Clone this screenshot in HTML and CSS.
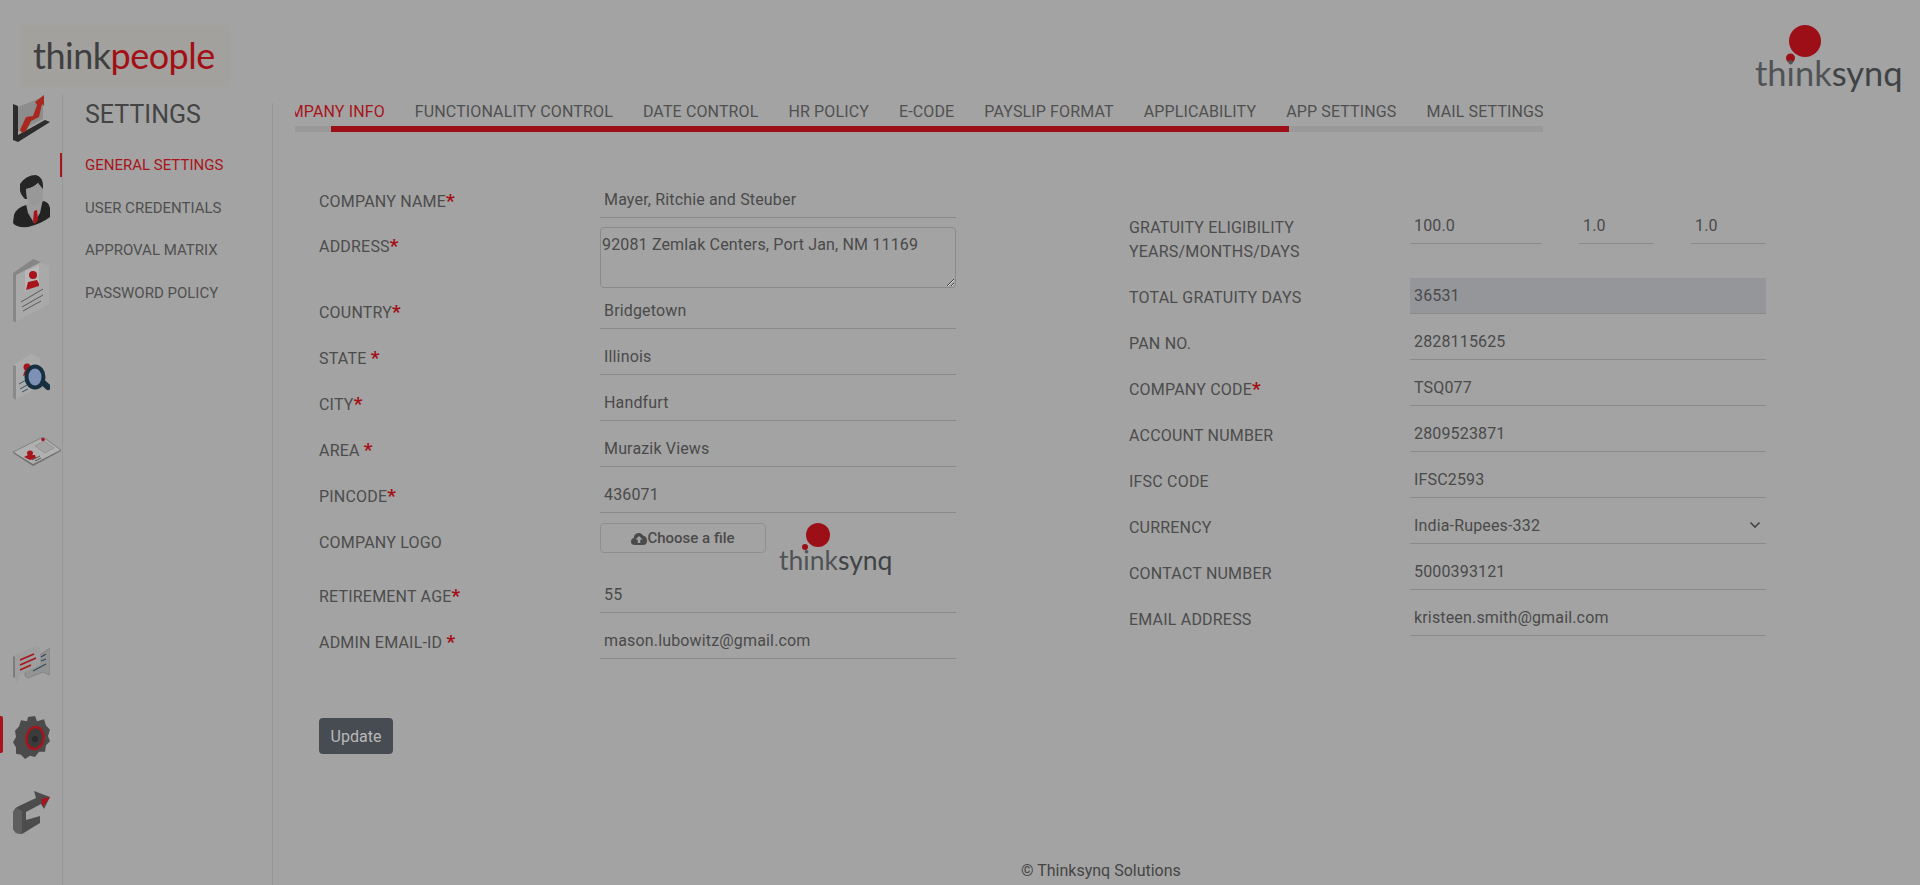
FILE: index.html
```html
<!DOCTYPE html>
<html lang="en">
<head>
  <meta charset="UTF-8">
  <title>Settings - Think People</title>
  <meta name="viewport" content="width=device-width, initial-scale=1.0">
  <link rel="stylesheet" href="styles.css">
</head>
<body>

  <header class="topbar">
    <div class="logo-people"><span>think</span><b>people</b></div>
    <div class="logo-synq">
      <svg class="logo-dots" width="36" height="38" viewBox="0 0 36 38"><circle cx="19" cy="16" r="16" fill="#9c0f17"/><circle cx="4.500" cy="33" r="4.500" fill="#9c0f17"/></svg>
      <span class="logo-synq-text">think<b>synq</b></span>
    </div>
  </header>

  <div class="layout">
    <nav class="rail">
      <div class="rail-group">
        <a class="rail-icon rail-chart">
          <svg width="37" height="48" viewBox="0 0 37 48">
            <polygon points="5,12 30,2 30,24 5,37" fill="#8d8d8d"/>
            <polygon points="0,9 5,11 5,40 32,25 37,27 5,47 0,45" fill="#2c2c2c"/>
            <polygon points="7,35 13,22 20,21 24,10 22,7 31,0 31,11 29,9 26,22 18,26 13,36 9,38" fill="#a8291f"/>
          </svg>
        </a>
        <a class="rail-icon rail-person">
          <svg width="37" height="53" viewBox="0 0 37 53">
            <path d="M1 40 Q3 33 13 30 L20 33 L30 26 Q36 27 37 33 L37 42 Q28 49 15 52 Q3 53 0 48 Z" fill="#232323"/>
            <polygon points="13,29 30,24 27,38 21,48 15,38" fill="#9c9c9c"/>
            <path d="M7 9 Q13 0 23 0 Q30 2 30 11 L30 20 L25 8 Q20 13 13 14 L14 24 L12 24 Q7 19 7 15 Z" fill="#262626"/>
            <path d="M13 14 Q20 13 25 8 L30 14 L30 22 Q28 29 21 31 Q15 28 14 23 Z" fill="#989898"/>
            <polygon points="21,36 24,35 25,45 22,49 20,46" fill="#a8141b"/>
          </svg>
        </a>
        <a class="rail-icon rail-doc">
          <svg width="37" height="64" viewBox="0 0 37 64">
            <polygon points="0,14 20,0 36,7 36,45 2,63 0,62" fill="#a9a9a9"/>
            <polygon points="0,14 20,0 28,3 3,16 3,63 2,63 0,62" fill="#868686"/>
            <polygon points="12,12 26,6 26,24 12,32" fill="#b8b8b8"/>
            <circle cx="20" cy="16" r="4" fill="#a8141b"/>
            <polygon points="13,31 15,23 24,21 26,25 26,27" fill="#a8141b"/>
            <path d="M8 43 L30 30 M9 48 L30 36 M10 52 L28 42" stroke="#5a5a5a" stroke-width="1"/>
          </svg>
        </a>
        <a class="rail-icon rail-search">
          <svg width="37" height="47" viewBox="0 0 37 47">
            <polygon points="0,11 18,0 27,4 27,32 2,46 0,44" fill="#ababab"/>
            <polygon points="0,11 3,12 3,46 0,44" fill="#8a8a8a"/>
            <circle cx="14" cy="13" r="3.500" fill="#a8141b"/>
            <polygon points="10,22 12,16 19,14 20,18" fill="#a8141b"/>
            <path d="M6 30 L13 26 M7 35 L14 31 M9 38 L15 35" stroke="#3a5568" stroke-width="1"/>
            <path d="M27 26 L35 33" stroke="#16303f" stroke-width="6" stroke-linecap="round"/>
            <ellipse cx="22" cy="23" rx="8.500" ry="10.500" fill="#7d90b5" stroke="#16303f" stroke-width="4"/>
          </svg>
        </a>
        <a class="rail-icon rail-card">
          <svg width="48" height="29" viewBox="0 0 48 29">
            <polygon points="0,15 30,0 48,13 20,28" fill="#b0b0b0" stroke="#808080" stroke-width="1"/>
            <polygon points="0,15 20,27 48,13 48,14 20,29 0,16" fill="#6f6f6f"/>
            <polygon points="22,9 31,4 41,11 32,16" fill="#a3a3a3" stroke="#8c8c8c" stroke-width=".7"/>
            <circle cx="30" cy="2.500" r="1.800" fill="#a8141b"/>
            <ellipse cx="17" cy="16" rx="3" ry="2.500" fill="#a8141b"/>
            <polygon points="11,20 15,18 22,18 23,21 17,23" fill="#a8141b"/>
            <path d="M19 23 L27 19 M22 24 L28 21" stroke="#555" stroke-width="1"/>
          </svg>
        </a>
      </div>
      <div class="rail-group rail-bottom">
        <a class="rail-icon rail-chat">
          <svg width="37" height="39" viewBox="0 0 37 39">
            <polygon points="19,14 28,9 37,3 37,28 36,30 30,27 15,33 12,31 12,26" fill="#949494" stroke="#7e7e7e" stroke-width=".8"/>
            <polygon points="0,11 24,0 27,2 27,20 12,27 6,31 4,39 2,33 0,32" fill="#9e9e9e"/>
            <polygon points="0,11 2,12 2,33 0,32" fill="#7c7c7c"/>
            <path d="M7 15 L21 9 M7 20 L23 13 M7 25 L18 20" stroke="#a8141b" stroke-width="1.600"/>
            <path d="M28 12 L33 9 M28 16 L33 14 M20 26 L33 19" stroke="#2c4a60" stroke-width="1.200"/>
          </svg>
        </a>
        <a class="rail-icon rail-gear">
          <svg width="37" height="43" viewBox="0 0 37 41" preserveAspectRatio="none">
            <path d="M15 1 L22 0 L24 5 L31 3 L33 9 L37 13 L35 19 L37 24 L33 28 L32 34 L26 34 L22 39 L17 38 L12 41 L8 37 L3 36 L3 30 L0 25 L3 20 L2 14 L6 10 L8 4 L14 5 Z" fill="#4b4b4b"/>
            <ellipse cx="22" cy="21" rx="8.500" ry="10.500" fill="#3b3b3b" stroke="#a8141b" stroke-width="2.400" transform="rotate(12 22 21)"/>
            <circle cx="22" cy="22" r="3" fill="#2a2a2a"/>
          </svg>
        </a>
        <a class="rail-icon rail-exit">
          <svg width="37" height="43" viewBox="0 0 37 43">
            <path d="M21 0 L37 6 L31 18 L28 13 L13 21 L13 29 L27 25 L27 32 L9 43 L3 42 L0 38 L0 22 Q1 17 6 15 L23 7 Z" fill="#4c4c4c"/>
            <path d="M0 22 Q1 18 4 17 L9 20 L9 43 L3 42 L0 38 Z" fill="#5e5e5e"/>
            <polygon points="28,8 37,6 30,16" fill="#a8141b"/>
          </svg>
        </a>
      </div>
    </nav>

    <aside class="sidebar">
      <h2>SETTINGS</h2>
      <ul class="side-menu">
        <li class="active">GENERAL SETTINGS</li>
        <li>USER CREDENTIALS</li>
        <li>APPROVAL MATRIX</li>
        <li>PASSWORD POLICY</li>
      </ul>
    </aside>

    <main class="content">
      <div class="tabs-box">
        <ul class="tabs">
          <li class="active">COMPANY INFO</li>
          <li>FUNCTIONALITY CONTROL</li>
          <li>DATE CONTROL</li>
          <li>HR POLICY</li>
          <li>E-CODE</li>
          <li>PAYSLIP FORMAT</li>
          <li>APPLICABILITY</li>
          <li>APP SETTINGS</li>
          <li>MAIL SETTINGS</li>
        </ul>
        <div class="tabs-track"><div class="tabs-thumb"></div></div>
      </div>

      <form class="company-form">
        <div class="form-col">
          <div class="row"><label>COMPANY NAME<em>*</em></label><input type="text" value="Mayer, Ritchie and Steuber"></div>
          <div class="row row-area"><label>ADDRESS<em>*</em></label><textarea>92081 Zemlak Centers, Port Jan, NM 11169</textarea></div>
          <div class="row"><label>COUNTRY<em>*</em></label><input type="text" value="Bridgetown"></div>
          <div class="row"><label>STATE <em>*</em></label><input type="text" value="Illinois"></div>
          <div class="row"><label>CITY<em>*</em></label><input type="text" value="Handfurt"></div>
          <div class="row"><label>AREA <em>*</em></label><input type="text" value="Murazik Views"></div>
          <div class="row"><label>PINCODE<em>*</em></label><input type="text" value="436071"></div>
          <div class="row row-logo">
            <label>COMPANY LOGO</label>
            <div class="file-box">
              <span class="file-btn">
                <svg width="16" height="13" viewBox="0 0 16 13"><path d="M4 13 Q0 13 0 9.500 Q0 6.500 2.800 6 Q3 1.500 7.500 1 Q10.500 .5 12 3.500 Q16 4.500 16 8.500 Q16 13 12 13 Z" fill="#4a4a4a"/><path d="M8 4 L11.500 7.500 L9.300 7.500 L9.300 11 L6.700 11 L6.700 7.500 L4.500 7.500 Z" fill="#a3a3a3"/></svg>Choose a file
              </span>
              <div class="logo-small">
                <svg class="logo-small-dots" width="28" height="30" viewBox="0 0 28 30"><ellipse cx="16" cy="12" rx="12" ry="12" fill="#9c0f17"/><circle cx="3" cy="24" r="3" fill="#9c0f17"/></svg>
                <span>think<b>synq</b></span>
              </div>
            </div>
          </div>
          <div class="row"><label>RETIREMENT AGE<em>*</em></label><input type="text" value="55"></div>
          <div class="row"><label>ADMIN EMAIL-ID <em>*</em></label><input type="text" value="mason.lubowitz@gmail.com"></div>
        </div>

        <div class="form-col form-col-right">
          <div class="row row-gratuity">
            <label>GRATUITY ELIGIBILITY<br>YEARS/MONTHS/DAYS</label>
            <div class="gratuity-inputs">
              <input type="text" value="100.0">
              <input type="text" value="1.0">
              <input type="text" value="1.0">
            </div>
          </div>
          <div class="row"><label>TOTAL GRATUITY DAYS</label><input class="readonly" type="text" value="36531" readonly></div>
          <div class="row"><label>PAN NO.</label><input type="text" value="2828115625"></div>
          <div class="row"><label>COMPANY CODE<em>*</em></label><input type="text" value="TSQ077"></div>
          <div class="row"><label>ACCOUNT NUMBER</label><input type="text" value="2809523871"></div>
          <div class="row"><label>IFSC CODE</label><input type="text" value="IFSC2593"></div>
          <div class="row">
            <label>CURRENCY</label>
            <div class="select-box">
              <select><option>India-Rupees-332</option></select>
              <svg class="select-arrow" width="12" height="8" viewBox="0 0 12 8"><path d="M1.500 1.500 L6 6 L10.500 1.500" fill="none" stroke="#444" stroke-width="1.600"/></svg>
            </div>
          </div>
          <div class="row"><label>CONTACT NUMBER</label><input type="text" value="5000393121"></div>
          <div class="row"><label>EMAIL ADDRESS</label><input type="text" value="kristeen.smith@gmail.com"></div>
        </div>

        <div class="form-actions"><button type="button">Update</button></div>
      </form>

      <footer class="page-footer">© Thinksynq Solutions</footer>
    </main>
  </div>

</body>
</html>
```

FILE: styles.css
```css
* { margin: 0; padding: 0; box-sizing: border-box; }
html, body { height: 100%; overflow: hidden; }
body { font-family: Roboto, sans-serif; font-size: 16px; background: #a3a3a3; color: #4a4a4a; }
ul { list-style: none; }

/* header */
.topbar { height: 94px; display: flex; justify-content: space-between; padding: 25px 20px 0 20px; }
.logo-people { width: 210px; height: 62px; background: #a2a19e; padding: 10px 0 0 13px; font-family: Lato, sans-serif; font-size: 36px; line-height: 40px; letter-spacing: -.5px; color: #3f3f3f; }
.logo-people b { font-weight: 400; color: #a30f14; }
.logo-synq { width: 145px; display: flex; flex-direction: column; }
.logo-dots { margin-left: 31px; margin-bottom: -6px; }
.logo-synq-text { font-family: Lato, sans-serif; font-size: 34.500px; line-height: 32px; color: #505356; white-space: nowrap; }
.logo-synq-text b { font-weight: 400; color: #3f4346; }

/* page layout */
.layout { display: flex; height: 791px; }
.rail { width: 63px; flex-shrink: 0; border-right: 1px solid #979797; display: flex; flex-direction: column; }
.rail-icon { display: block; padding-left: 13px; line-height: 0; }
.rail-chart { height: 81px; padding-top: 1px; }
.rail-person { height: 84px; }
.rail-doc { height: 95px; }
.rail-search { height: 83px; }
.rail-card { height: 40px; }
.rail-bottom { margin-top: 168px; }
.rail-chat { height: 71px; }
.rail-gear { height: 75px; position: relative; }
.rail-gear::before { content: ""; position: absolute; left: 0; top: 0; width: 3px; height: 37px; background: #a8141b; border-radius: 0 2px 2px 0; }

.sidebar { width: 210px; flex-shrink: 0; margin-top: 9px; border-right: 1px solid #979797; padding-left: 22px; }
.sidebar h2 { font-size: 25px; font-weight: 400; line-height: 28px; margin-top: -2px; color: #444; }
.side-menu { margin-top: 15px; }
.side-menu li { height: 42.500px; line-height: 42px; font-size: 15px; color: #505050; position: relative; }
.side-menu li.active { color: #a8141b; }
.side-menu li.active::before { content: ""; position: absolute; left: -25px; top: 9px; width: 2px; height: 24px; background: #a8141b; }

/* tabs */
.content { flex: 1; padding-left: 22px; }
.tabs-box { width: 1248px; margin-top: 7px; overflow: hidden; }
.tabs { display: flex; margin-left: -27px; height: 25px; white-space: nowrap; }
.tabs li { font-size: 16px; line-height: 21px; letter-spacing: .13px; margin-right: 30px; flex-shrink: 0; color: #505050; }
.tabs li.active { color: #a8141b; }
.tabs-track { height: 6px; background: #999; }
.tabs-thumb { margin-left: 36px; width: 958px; height: 6px; background: #9c0f17; }

/* form */
.company-form { display: grid; grid-template-columns: 637px 637px; column-gap: 173px; margin-top: 48px; margin-left: 24px; }
.form-col-right { padding-top: 26px; }
.row { display: grid; grid-template-columns: 281px 1fr; margin-bottom: 8px; }
.row label { padding-top: 10px; line-height: 24px; font-size: 16px; letter-spacing: .2px; color: #4c4c4c; }
.row em { font-style: normal; font-size: 19px; line-height: 19px; font-weight: 700; color: #a30f14; }
input, select, textarea { font-family: Roboto, sans-serif; font-size: 16px; letter-spacing: .16px; color: #4a4a4a; background: transparent; border: 0; border-bottom: 1px solid #8a8a8a; outline: none; border-radius: 0; }
input, select { width: 100%; height: 38px; padding: 2px 4px 0; }
.row-area { margin-bottom: 0; }
.row-area textarea { display: block; width: 100%; height: 61px; margin: 1px 0 3px; padding: 7px 1px; border: 1px solid #8a8a8a; border-radius: 4px; }
.row-area label { padding-top: 9px; }
.row-logo { height: 46px; }
.row-logo label { padding-top: 10px; }
.file-box { display: flex; gap: 13px; padding-top: 2px; }
.file-btn { width: 166px; height: 30px; border: 1px solid #8f8f8f; border-radius: 4px; font-size: 15px; font-weight: 500; display: flex; align-items: center; justify-content: center; }
.logo-small { width: 111px; display: flex; flex-direction: column; font-family: Lato, sans-serif; font-size: 26.500px; line-height: 24px; color: #505356; }
.logo-small b { font-weight: 400; color: #3f4346; }
.logo-small-dots { margin-left: 23px; margin-bottom: -5px; }
.row-gratuity { height: 62px; }
.gratuity-inputs { display: flex; justify-content: space-between; }
.gratuity-inputs input { width: 75px; }
.gratuity-inputs input:first-child { width: 132px; }
input.readonly { background: #95969a; background-clip: padding-box; padding-top: 0; border-top: 2px solid #a3a3a3; }
.select-box { position: relative; }
select { appearance: none; }
.select-arrow { position: absolute; right: 5px; top: 15px; }

.form-actions { grid-column: 1 / 3; margin-top: 51px; }
.form-actions button { width: 74px; height: 36px; background: #474c53; color: #b9b9b9; border: 0; border-radius: 4px; font-family: Roboto, sans-serif; font-size: 16px; }

.page-footer { margin-top: 107px; padding-left: 726px; line-height: 20px; font-size: 16px; color: #454545; }
```
